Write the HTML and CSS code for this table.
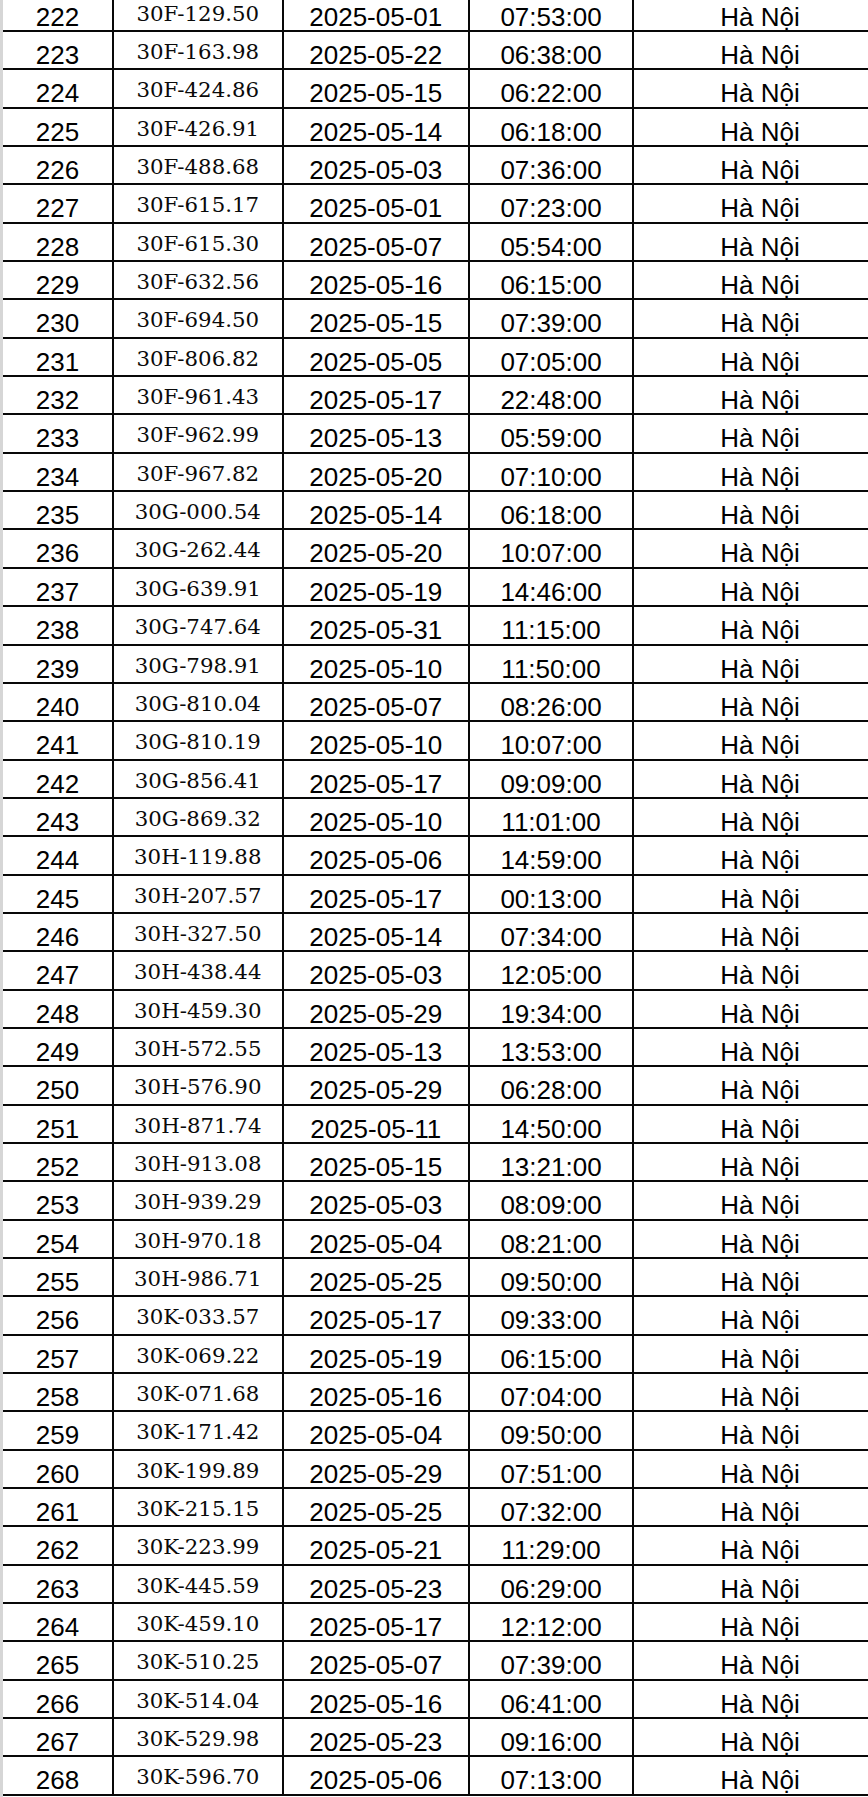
FILE: index.html
```html
<!DOCTYPE html>
<html lang="vi">
<head>
<meta charset="utf-8">
<title>Danh sách</title>
<link rel="stylesheet" href="styles.css">
</head>
<body>
<div class="sheet">
<div class="table">
<div class="row"><div class="c n">222</div><div class="c p">30F-129.50</div><div class="c d">2025-05-01</div><div class="c t">07:53:00</div><div class="c l">Hà Nội</div></div>
<div class="row"><div class="c n">223</div><div class="c p">30F-163.98</div><div class="c d">2025-05-22</div><div class="c t">06:38:00</div><div class="c l">Hà Nội</div></div>
<div class="row"><div class="c n">224</div><div class="c p">30F-424.86</div><div class="c d">2025-05-15</div><div class="c t">06:22:00</div><div class="c l">Hà Nội</div></div>
<div class="row"><div class="c n">225</div><div class="c p">30F-426.91</div><div class="c d">2025-05-14</div><div class="c t">06:18:00</div><div class="c l">Hà Nội</div></div>
<div class="row"><div class="c n">226</div><div class="c p">30F-488.68</div><div class="c d">2025-05-03</div><div class="c t">07:36:00</div><div class="c l">Hà Nội</div></div>
<div class="row"><div class="c n">227</div><div class="c p">30F-615.17</div><div class="c d">2025-05-01</div><div class="c t">07:23:00</div><div class="c l">Hà Nội</div></div>
<div class="row"><div class="c n">228</div><div class="c p">30F-615.30</div><div class="c d">2025-05-07</div><div class="c t">05:54:00</div><div class="c l">Hà Nội</div></div>
<div class="row"><div class="c n">229</div><div class="c p">30F-632.56</div><div class="c d">2025-05-16</div><div class="c t">06:15:00</div><div class="c l">Hà Nội</div></div>
<div class="row"><div class="c n">230</div><div class="c p">30F-694.50</div><div class="c d">2025-05-15</div><div class="c t">07:39:00</div><div class="c l">Hà Nội</div></div>
<div class="row"><div class="c n">231</div><div class="c p">30F-806.82</div><div class="c d">2025-05-05</div><div class="c t">07:05:00</div><div class="c l">Hà Nội</div></div>
<div class="row"><div class="c n">232</div><div class="c p">30F-961.43</div><div class="c d">2025-05-17</div><div class="c t">22:48:00</div><div class="c l">Hà Nội</div></div>
<div class="row"><div class="c n">233</div><div class="c p">30F-962.99</div><div class="c d">2025-05-13</div><div class="c t">05:59:00</div><div class="c l">Hà Nội</div></div>
<div class="row"><div class="c n">234</div><div class="c p">30F-967.82</div><div class="c d">2025-05-20</div><div class="c t">07:10:00</div><div class="c l">Hà Nội</div></div>
<div class="row"><div class="c n">235</div><div class="c p">30G-000.54</div><div class="c d">2025-05-14</div><div class="c t">06:18:00</div><div class="c l">Hà Nội</div></div>
<div class="row"><div class="c n">236</div><div class="c p">30G-262.44</div><div class="c d">2025-05-20</div><div class="c t">10:07:00</div><div class="c l">Hà Nội</div></div>
<div class="row"><div class="c n">237</div><div class="c p">30G-639.91</div><div class="c d">2025-05-19</div><div class="c t">14:46:00</div><div class="c l">Hà Nội</div></div>
<div class="row"><div class="c n">238</div><div class="c p">30G-747.64</div><div class="c d">2025-05-31</div><div class="c t">11:15:00</div><div class="c l">Hà Nội</div></div>
<div class="row"><div class="c n">239</div><div class="c p">30G-798.91</div><div class="c d">2025-05-10</div><div class="c t">11:50:00</div><div class="c l">Hà Nội</div></div>
<div class="row"><div class="c n">240</div><div class="c p">30G-810.04</div><div class="c d">2025-05-07</div><div class="c t">08:26:00</div><div class="c l">Hà Nội</div></div>
<div class="row"><div class="c n">241</div><div class="c p">30G-810.19</div><div class="c d">2025-05-10</div><div class="c t">10:07:00</div><div class="c l">Hà Nội</div></div>
<div class="row"><div class="c n">242</div><div class="c p">30G-856.41</div><div class="c d">2025-05-17</div><div class="c t">09:09:00</div><div class="c l">Hà Nội</div></div>
<div class="row"><div class="c n">243</div><div class="c p">30G-869.32</div><div class="c d">2025-05-10</div><div class="c t">11:01:00</div><div class="c l">Hà Nội</div></div>
<div class="row"><div class="c n">244</div><div class="c p">30H-119.88</div><div class="c d">2025-05-06</div><div class="c t">14:59:00</div><div class="c l">Hà Nội</div></div>
<div class="row"><div class="c n">245</div><div class="c p">30H-207.57</div><div class="c d">2025-05-17</div><div class="c t">00:13:00</div><div class="c l">Hà Nội</div></div>
<div class="row"><div class="c n">246</div><div class="c p">30H-327.50</div><div class="c d">2025-05-14</div><div class="c t">07:34:00</div><div class="c l">Hà Nội</div></div>
<div class="row"><div class="c n">247</div><div class="c p">30H-438.44</div><div class="c d">2025-05-03</div><div class="c t">12:05:00</div><div class="c l">Hà Nội</div></div>
<div class="row"><div class="c n">248</div><div class="c p">30H-459.30</div><div class="c d">2025-05-29</div><div class="c t">19:34:00</div><div class="c l">Hà Nội</div></div>
<div class="row"><div class="c n">249</div><div class="c p">30H-572.55</div><div class="c d">2025-05-13</div><div class="c t">13:53:00</div><div class="c l">Hà Nội</div></div>
<div class="row"><div class="c n">250</div><div class="c p">30H-576.90</div><div class="c d">2025-05-29</div><div class="c t">06:28:00</div><div class="c l">Hà Nội</div></div>
<div class="row"><div class="c n">251</div><div class="c p">30H-871.74</div><div class="c d">2025-05-11</div><div class="c t">14:50:00</div><div class="c l">Hà Nội</div></div>
<div class="row"><div class="c n">252</div><div class="c p">30H-913.08</div><div class="c d">2025-05-15</div><div class="c t">13:21:00</div><div class="c l">Hà Nội</div></div>
<div class="row"><div class="c n">253</div><div class="c p">30H-939.29</div><div class="c d">2025-05-03</div><div class="c t">08:09:00</div><div class="c l">Hà Nội</div></div>
<div class="row"><div class="c n">254</div><div class="c p">30H-970.18</div><div class="c d">2025-05-04</div><div class="c t">08:21:00</div><div class="c l">Hà Nội</div></div>
<div class="row"><div class="c n">255</div><div class="c p">30H-986.71</div><div class="c d">2025-05-25</div><div class="c t">09:50:00</div><div class="c l">Hà Nội</div></div>
<div class="row"><div class="c n">256</div><div class="c p">30K-033.57</div><div class="c d">2025-05-17</div><div class="c t">09:33:00</div><div class="c l">Hà Nội</div></div>
<div class="row"><div class="c n">257</div><div class="c p">30K-069.22</div><div class="c d">2025-05-19</div><div class="c t">06:15:00</div><div class="c l">Hà Nội</div></div>
<div class="row"><div class="c n">258</div><div class="c p">30K-071.68</div><div class="c d">2025-05-16</div><div class="c t">07:04:00</div><div class="c l">Hà Nội</div></div>
<div class="row"><div class="c n">259</div><div class="c p">30K-171.42</div><div class="c d">2025-05-04</div><div class="c t">09:50:00</div><div class="c l">Hà Nội</div></div>
<div class="row"><div class="c n">260</div><div class="c p">30K-199.89</div><div class="c d">2025-05-29</div><div class="c t">07:51:00</div><div class="c l">Hà Nội</div></div>
<div class="row"><div class="c n">261</div><div class="c p">30K-215.15</div><div class="c d">2025-05-25</div><div class="c t">07:32:00</div><div class="c l">Hà Nội</div></div>
<div class="row"><div class="c n">262</div><div class="c p">30K-223.99</div><div class="c d">2025-05-21</div><div class="c t">11:29:00</div><div class="c l">Hà Nội</div></div>
<div class="row"><div class="c n">263</div><div class="c p">30K-445.59</div><div class="c d">2025-05-23</div><div class="c t">06:29:00</div><div class="c l">Hà Nội</div></div>
<div class="row"><div class="c n">264</div><div class="c p">30K-459.10</div><div class="c d">2025-05-17</div><div class="c t">12:12:00</div><div class="c l">Hà Nội</div></div>
<div class="row"><div class="c n">265</div><div class="c p">30K-510.25</div><div class="c d">2025-05-07</div><div class="c t">07:39:00</div><div class="c l">Hà Nội</div></div>
<div class="row"><div class="c n">266</div><div class="c p">30K-514.04</div><div class="c d">2025-05-16</div><div class="c t">06:41:00</div><div class="c l">Hà Nội</div></div>
<div class="row"><div class="c n">267</div><div class="c p">30K-529.98</div><div class="c d">2025-05-23</div><div class="c t">09:16:00</div><div class="c l">Hà Nội</div></div>
<div class="row"><div class="c n">268</div><div class="c p">30K-596.70</div><div class="c d">2025-05-06</div><div class="c t">07:13:00</div><div class="c l">Hà Nội</div></div>
</div>
</div>
</body>
</html>
```

FILE: styles.css
```css
html, body {
  margin: 0;
  padding: 0;
  background: #ffffff;
}

body {
  width: 868px;
  height: 1797px;
  overflow: hidden;
}

.sheet {
  height: 1797px;
  border-left: 3px solid #d6d6d6;
  overflow: hidden;
  box-sizing: border-box;
}

.table {
  width: 883px;
  margin-top: -6.35px;
}

.row {
  display: grid;
  grid-template-columns: 111px 169.5px 186.5px 164px 252px;
  height: 38.35px;
  box-sizing: border-box;
  border-bottom: 2px solid #080808;
}

.c {
  display: flex;
  align-items: center;
  justify-content: center;
  box-sizing: border-box;
  border-right: 2px solid #080808;
  color: #000000;
  white-space: nowrap;
  font-family: "Liberation Sans", Arial, sans-serif;
  font-size: 26px;
  padding-top: 8px;
}

.c.l {
  border-right: none;
}

.c.p {
  font-family: "DejaVu Serif", "Liberation Serif", serif;
  font-size: 21.3px;
  padding-top: 0;
  color: #0a0a0a;
}
```
